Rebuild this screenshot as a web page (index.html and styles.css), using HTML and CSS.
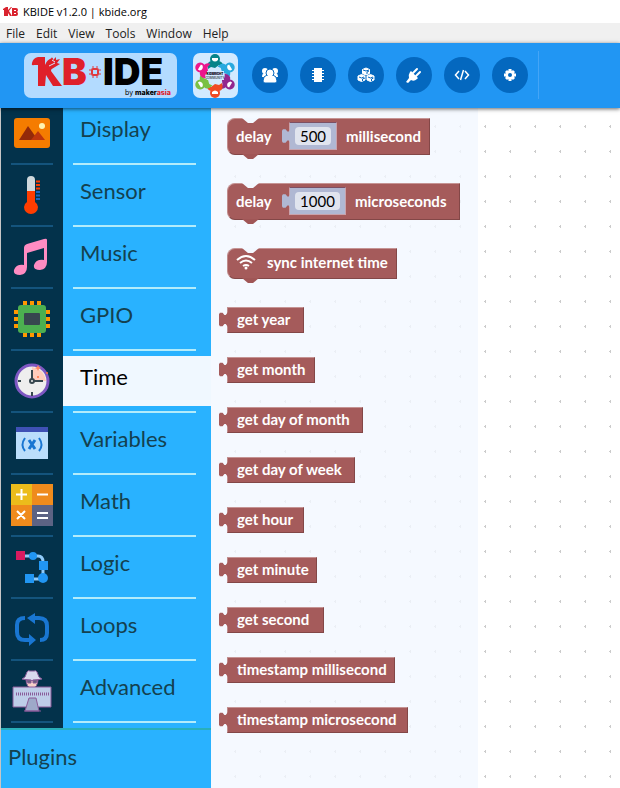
FILE: index.html
```html
<!DOCTYPE html>
<html lang="en">
<head>
<meta charset="utf-8">
<title>KBIDE v1.2.0 | kbide.org</title>
<link rel="stylesheet" href="styles.css">
</head>
<body>
<header class="titlebar">
  <svg class="app-icon" width="16" height="10" viewBox="0 0 16 10" aria-hidden="true"><path fill="#d9232e" d="M0 2 3 0v9H1V3H0zM3 0h2v3l3-3h1L6 4l3 5H7L5 6v3H3zM9 1h4q2 0 2 2 0 1-1 2 1 0 1 2 0 2-2 2H9z"/><path fill="#fff" d="M11 3h2v1h-2zM11 6h2v1h-2z"/></svg>
  <span>KBIDE v1.2.0 | kbide.org</span>
</header>
<nav class="menubar">
  <button>File</button><button>Edit</button><button>View</button><button>Tools</button><button>Window</button><button>Help</button>
</nav>
<div class="toolbar">
  <a class="logo" href="#" aria-label="KB IDE">
    <svg width="153" height="45" viewBox="0 0 153 45">
      <g class="logo-red"><path d="M8 10Q9 5 14 4h7v8q2-6 8-7l-2 13 11 15h-9l-7-11-1 11h-7V12h-4q-3 1-2-2z"/><path d="M25 10l3-6 1 3 3-3v3l4-1-3 4 3 1-5 3-8 5z"/>
        <path fill="none" stroke="#d6e9ff" d="M28 7l3 2M25 13l6-3"/>
        <text class="logo-big" x="38" y="32">B</text>
        <g fill="none" stroke="#e03a3e"><rect x="68" y="16" width="6" height="6" rx="1" stroke-width="2"/><path d="M65 17h2m8 0h2M65 21h2m8 0h2M69 13v2m4-2v2m-4 8v2m4-2v2"/></g></g>
      <text class="logo-big" x="79" y="32">IDE</text>
      <text class="logo-small" x="101" y="42">by <tspan class="logo-strong">maker<tspan class="logo-red">asia</tspan></tspan></text>
    </svg>
  </a>
  <a class="community" href="#" aria-label="Community">
    <svg width="45" height="45" viewBox="0 0 45 45">
      <defs><g id="member"><path d="M15 16q-2-7 3-8h8q4 1 4 5l-4-1-4 3-4-1z"/><circle cx="22" cy="6" r="5"/><path fill="#fff" d="M19 5h6v2q-3 3-6 0z"/></g></defs>
      <g fill="#078489"><use href="#member"/></g>
      <g fill="#29a9df" transform="rotate(60 22 23)"><use href="#member"/></g>
      <g fill="#93278f" transform="rotate(120 22 23)"><use href="#member"/></g>
      <g fill="#f04a24" transform="rotate(180 22 23)"><use href="#member"/></g>
      <g fill="#7ac143" transform="rotate(240 22 23)"><use href="#member"/></g>
      <g fill="#ec168c" transform="rotate(300 22 23)"><use href="#member"/></g>
      <path fill="#d3eaff" d="M14 18h17v9H14z"/>
      <text class="tiny-mark" x="22" y="22">KIDBRIGHT</text><text class="tiny-mark thin" x="22" y="26">COMMUNITY</text>
    </svg>
  </a>
  <div class="tools">
    <button aria-label="Community"><svg width="18" height="16" viewBox="0 0 18 16"><g fill="#fff"><circle cx="4" cy="4" r="3"/><circle cx="14" cy="4" r="3"/><path d="M1 10q0-4 3-4h10q3 0 3 4z"/></g><path fill="#fff" stroke="#0468bf" d="M2 14q0-5 4-6h6q4 1 4 6 0 2-2 2H4q-2 0-2-2z"/><circle cx="9" cy="6" r="4" fill="#fff" stroke="#0468bf"/><path fill="#fff" d="M6 9h6v3H6z"/></svg></button>
    <button aria-label="Board"><svg width="14" height="16" viewBox="0 0 14 16"><path fill="#fff" d="M3 1h8v14H3z"/><path stroke="#fff" stroke-width="1" d="M1 3.500h12M1 6.500h12M1 9.500h12M1 12.500h12"/></svg></button>
    <button aria-label="Packages"><svg width="18" height="16" viewBox="0 0 18 16"><g fill="#fff" stroke="#fff" stroke-linejoin="round"><path d="M9 1l3.500 1.500v4L9 8 5.500 6.500v-4z"/><path d="M4.500 7.500L8 9v4l-3.500 1.500L1 13V9zM13.500 7.500L17 9v4l-3.500 1.500L10 13V9z"/></g><path fill="none" stroke="#0468bf" d="M6 3l3 1 3-1M10 7V5l2-1M2 10l2.500 1L7 10M5.500 14v-2L8 11M11 10l2.500 1 2.500-1M14.500 14v-2l2-1"/></svg></button>
    <button aria-label="Plugins"><svg width="16" height="16" viewBox="0 0 16 16"><path fill="#fff" d="M5 4l7 7-1 1q-3 3-6 1l-3 3-2-1 3-4Q2 8 4 5z"/><path stroke="#fff" stroke-width="2" stroke-linecap="round" d="M7 6l4-4M10 9l4-4"/></svg></button>
    <button aria-label="Source code"><svg width="16" height="14" viewBox="0 0 16 14"><path fill="none" stroke="#fff" stroke-width="1.500" d="M5 3L1.500 7 5 11M11 3l3.500 4-3.500 4M9.500 2l-3 10"/></svg></button>
    <button aria-label="Settings"><svg width="14" height="14" viewBox="0 0 14 14"><path stroke="#fff" stroke-width="3" d="M7 1v12M1 7h12M3 3l8 8M11 3l-8 8"/><circle cx="7" cy="7" r="4.500" fill="#fff"/><circle cx="7" cy="7" r="2" fill="#0468bf"/></svg></button>
  </div>
</div>
<main class="editor">
  <aside class="sidebar">
    <ul class="categories">
      <li><button><span class="icon"><svg width="42" height="42" viewBox="0 0 42 42"><rect x="3" y="6" width="36" height="30" rx="3" fill="#f57c00"/><path fill="#942a09" d="M8 28l9-14 10 14z"/><path fill="#bf360c" d="M20 28l7-9 7 9z"/><circle cx="31" cy="14" r="3" fill="#fff3b0"/></svg></span><span class="name">Display</span></button></li>
      <li><button><span class="icon"><svg width="42" height="42" viewBox="0 0 42 42"><path fill="#cfd8dc" d="M16 19V6q0-4 4-4t4 4v13z"/><path fill="#ff3d00" d="M16 17h8v11q3 2 3 5a7 7 0 0 1-14 0q0-3 3-5z"/><path stroke="#ff3d00" stroke-width="2" d="M25 7.500h4M25 11h4M25 14.500h4"/><path stroke="#1565c0" stroke-width="2" d="M25 18h4M25 21.500h4M25 25h4"/></svg></span><span class="name">Sensor</span></button></li>
      <li><button><span class="icon"><svg width="42" height="42" viewBox="0 0 42 42"><path fill="#ff8cc2" d="M13 12Q13 9 16 8L33 3q3-1 3 1v22q0 7-7 8-7 0-6-5 2-6 10-5V12l-17 5v14q0 7-7 8-7 0-6-5 2-6 10-5z"/></svg></span><span class="name">Music</span></button></li>
      <li><button><span class="icon"><svg width="42" height="42" viewBox="0 0 42 42"><path fill="none" stroke="#ff9800" stroke-width="4" d="M14 3v36M21 3v36M28 3v36M3 14h36M3 21h36M3 28h36"/><rect x="7" y="7" width="28" height="28" rx="3" fill="#4caf50"/><rect x="13" y="15" width="16" height="12" rx="1" fill="#37474f"/></svg></span><span class="name">GPIO</span></button></li>
      <li class="active"><button aria-current="true"><span class="icon"><svg width="42" height="42" viewBox="0 0 42 42"><circle cx="21" cy="21" r="16" fill="#eee" stroke="#7e57c2" stroke-width="3"/><path fill="#ffccbc" d="M21 21V7q12 2 14 14z"/><path fill="none" stroke="#37474f" stroke-width="2" d="M21 10v11h11M21 32v4M7 21h3"/><circle cx="21" cy="21" r="2" fill="#eee" stroke="#37474f" stroke-width="2"/><path fill="#ff8a65" d="M27 5l1 2 2 1-2 1-1 2-1-2-2-1 2-1z"/><circle cx="27" cy="17" r="1" fill="#ff7043"/><circle cx="36" cy="13" r="1" fill="#ff7043"/></svg></span><span class="name">Time</span></button></li>
      <li><button><span class="icon"><svg width="42" height="42" viewBox="0 0 42 42"><path fill="#bbdefb" d="M5 5h32v32H5z"/><path fill="#3f51b5" d="M5 5h32v5H5z"/><g fill="none" stroke="#1976d2" stroke-width="2"><path d="M14 16q-5 7 0 13M28 16q5 7 0 13"/><path stroke-width="3" d="M18 18l6 9M24 18l-6 9"/></g></svg></span><span class="name">Variables</span></button></li>
      <li><button><span class="icon"><svg width="42" height="42" viewBox="0 0 42 42"><path fill="#ef8b1c" d="M0 0h42v42H0z"/><path fill="#ecbc1b" d="M0 0h21v21H0z"/><path fill="#5c6384" d="M21 21h21v21H21z"/><path fill="none" stroke="#fff" stroke-width="2" d="M5 10.500h11M10.500 5v11M26 10.500h11M6 27l8 8M14 27l-8 8M26 29h11M26 34h11"/></svg></span><span class="name">Math</span></button></li>
      <li><button><span class="icon"><svg width="42" height="42" viewBox="0 0 42 42"><path fill="none" stroke="#90caf9" stroke-width="3" d="M13 10h14q5 0 5 6v17H20"/><path fill="#d81b60" d="M5 5h9v9H5z"/><g fill="#2196f3"><circle cx="22" cy="10" r="4"/><path d="M28 15h9v9h-9zM14 28h9v9h-9z"/><circle cx="32" cy="32" r="5"/></g></svg></span><span class="name">Logic</span></button></li>
      <li><button><span class="icon"><svg width="42" height="42" viewBox="0 0 42 42"><g fill="none" stroke="#1976d2" stroke-width="4"><path d="M14 10Q6 10 6 17v7q0 8 8 8h6M22 10h6q8 0 8 8v7q0 7-7 7"/></g><path fill="#1976d2" d="M24 5v11l-8-6zM18 26l7 6-7 6z"/></svg></span><span class="name">Loops</span></button></li>
      <li><button><span class="icon"><svg width="42" height="42" viewBox="0 0 42 42"><g stroke="#8a5b99"><path fill="#f6d1c8" d="M15 8q0 10 6 10t6-10z"/><path fill="#d9d9ee" d="M14 7l2-5q1-2 3-1h4q2-1 3 1l2 5 3 2q-10 3-20 0z"/><path fill="#66637c" d="M15 10h5v3h-3zM22 10h5l-2 3h-3z"/><path fill="#becde8" stroke-width="1" d="M2 17h38v20H2z"/><path fill="#9ea9c9" d="M18 28h7l3 13H14z"/><path stroke-dasharray="1 1" stroke-width="3" d="M5 24h33"/><path d="M13 41h17"/></g></svg></span><span class="name">Advanced</span></button></li>
    </ul>
    <button class="plugins">Plugins</button>
  </aside>
  <section class="workspace">
    <div class="flyout">
      <div class="block statement w-milli"><span class="verb">delay</span><label class="number"><input aria-label="Milliseconds" value="500"></label><span>millisecond</span></div>
      <div class="block statement w-micro"><span class="verb">delay</span><label class="number long"><input aria-label="Microseconds" value="1000"></label><span>microseconds</span></div>
      <div class="block statement compact w-sync"><svg class="wifi" width="20" height="16" viewBox="0 0 20 16"><g fill="none" stroke="#fff" stroke-width="2"><path d="M1 6q9-8 18 0M4 9q6-5 12 0M7 12q3-2 6 0"/></g><circle cx="10" cy="14" r="1.500" fill="#fff"/></svg><span>sync internet time</span></div>
      <div class="reporters">
        <div class="block value w-year">get year</div>
        <div class="block value w-month">get month</div>
        <div class="block value w-daymonth">get day of month</div>
        <div class="block value w-dayweek">get day of week</div>
        <div class="block value w-year">get hour</div>
        <div class="block value w-minute">get minute</div>
        <div class="block value w-second">get second</div>
        <div class="block value w-stampmilli">timestamp millisecond</div>
        <div class="block value w-stampmicro">timestamp microsecond</div>
      </div>
    </div>
  </section>
</main>
</body>
</html>
```
FILE: styles.css
```css
* { box-sizing: border-box; }
body { margin: 0; min-height: 100vh; display: flex; flex-direction: column; background: #fff; font-family: "Open Sans", sans-serif; }
button { font: inherit; color: inherit; border: 0; padding: 0; background: none; cursor: pointer; }
svg { display: block; flex: none; }

.titlebar { height: 23px; display: flex; align-items: center; gap: 4px; padding-left: 3px; font-size: 11px; color: #000; }
.menubar { height: 20px; display: flex; align-items: center; gap: 11px; padding-left: 6px; background: #f0f0f0; font-size: 12px; color: #222; }

.toolbar { height: 65px; display: flex; align-items: center; padding: 0 0 1px 24px; background: #2196f3; box-shadow: 0 1px 4px rgba(0, 0, 0, .6); position: relative; z-index: 2; }
.logo { background: #b3dbff; border-radius: 7px; }
.community { margin-left: 16px; background: #d3eaff; border-radius: 7px; }
.logo-red { fill: #df202a; }
.logo-big { font: 900 37px Inter, sans-serif; }
.logo-small { font: 7px Inter, sans-serif; }
.logo-strong { font-weight: 800; }
.tiny-mark { font: 900 3px Inter, sans-serif; text-anchor: middle; }
.thin { font-weight: 400; }
.tools { display: flex; align-items: center; gap: 12px; height: 48px; margin-left: 14px; padding-right: 10px; border-right: 1px solid #44a5f7; }
.tools button { width: 36px; height: 36px; border-radius: 50%; background: #0468bf; display: grid; place-items: center; }

.editor { flex: 1; display: flex; }
.sidebar { width: 211px; flex: none; display: flex; flex-direction: column; border-left: 1px solid #c6c6c6; background: #29b2ff; color: #14414f; font: 22px Lato, sans-serif; }
.categories { list-style: none; margin: 0; padding: 0; }
.categories button { width: 100%; display: grid; grid-template-columns: 62px 1fr; text-align: left; }
.icon { height: 62px; padding: 4px 10px 0; background: #03324b; }
.icon::after { content: ""; display: block; height: 2px; margin-top: 9px; background: #14547d; }
.name { display: block; line-height: 42px; padding-left: 17px; position: relative; }
.name::after { content: ""; position: absolute; left: 10px; right: 15px; top: 55px; height: 2px; background: #b3ecfb; }
.active .name { height: 50px; background: #f0f8ff; color: #000; }
.plugins { flex: 1; border-top: 2px solid #29afba; padding: 0 7px 6px; text-align: left; }

.workspace { flex: 1; background: url("data:image/svg+xml,%3Csvg xmlns='http://www.w3.org/2000/svg' width='25' height='25'%3E%3Cpath stroke='%23ccc' d='M23 18.500h3M24.500 17v3'/%3E%3C/svg%3E"); }
.flyout { width: 267px; min-height: 100%; padding: 10px 0 0 16px; background: rgba(242, 248, 255, .8); display: flex; flex-direction: column; align-items: flex-start; gap: 28px; }
.reporters { display: flex; flex-direction: column; align-items: flex-start; gap: 24px; }
.block { position: relative; display: flex; align-items: center; background: #a55b5b; color: #fff; font: 700 15px Lato, sans-serif; white-space: nowrap; border: 1px solid #834747; border-top-color: #c59494; border-left-color: #c08c8c; }
.statement { height: 37px; border-radius: 8px 0 0 8px; padding: 0 0 2px 8px; }
.compact { height: 31px; padding-bottom: 4px; }
.statement::before, .statement::after { content: ""; position: absolute; left: 14px; width: 17px; height: 5px; clip-path: polygon(0 0, 100% 0, 65% 100%, 35% 100%); }
.statement::before { top: -1px; background: #f3f8ff; }
.statement::after { bottom: -5px; background: #a05656; }
.value { height: 26px; padding: 0 0 2px 9px; }
.value::before, .number::before { content: ""; position: absolute; left: -9px; top: 4px; width: 9px; height: 15px; background: #a55b5b; clip-path: polygon(0 15%, 10% 5%, 40% 5%, 60% 20%, 75% 20%, 100% 0, 100% 100%, 75% 80%, 60% 80%, 40% 95%, 10% 95%, 0 85%); }
.number::before { background: #b0b8d3; left: -8px; top: 6px; }
.verb { width: 53px; }
.number { position: relative; width: 48px; height: 28px; margin-right: 9px; padding: 4px 5px; background: #b0b8d3; border: 1px solid #c9a2ab; border-top-color: #7c5064; display: flex; }
.number input { width: 100%; min-width: 0; border: 0; border-radius: 4px; padding: 0; background: #e0e4ee; text-align: center; font: 15px Lato, sans-serif; color: #000; }
.long { width: 57px; }
.wifi { margin-right: 11px; }
.w-milli { width: 203px; }
.w-micro { width: 233px; }
.w-sync { width: 170px; }
.w-year { width: 77px; }
.w-month { width: 88px; }
.w-daymonth { width: 136px; }
.w-dayweek { width: 128px; }
.w-minute { width: 90px; }
.w-second { width: 97px; }
.w-stampmilli { width: 168px; }
.w-stampmicro { width: 181px; }
```
